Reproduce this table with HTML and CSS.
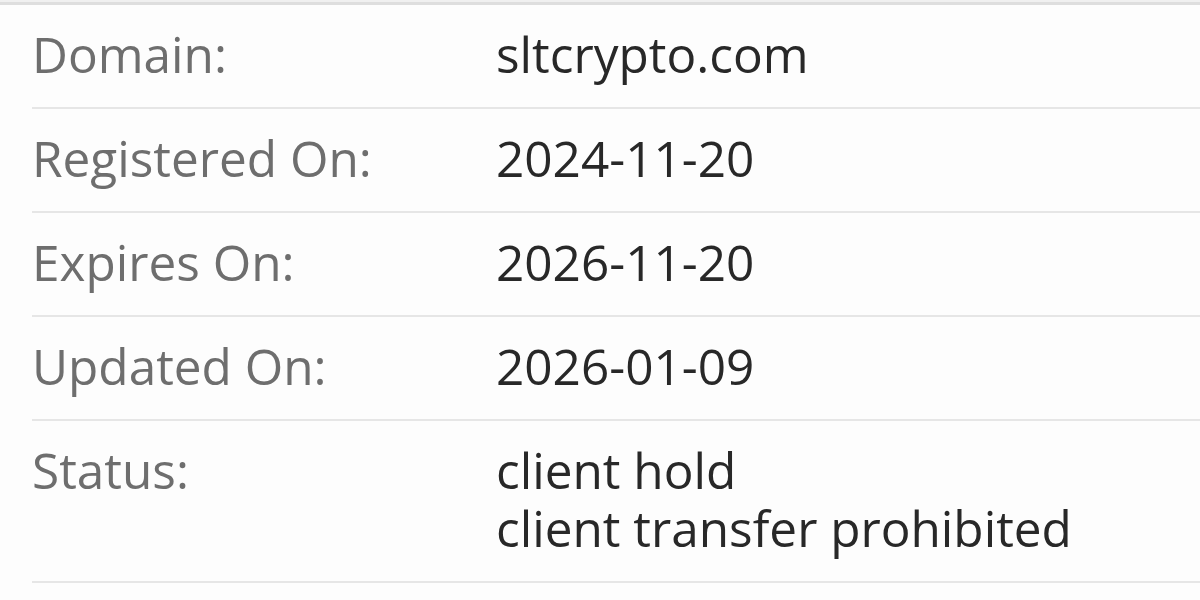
FILE: index.html
```html
<!DOCTYPE html>
<html>
<head>
<meta charset="utf-8">
<link rel="stylesheet" href="styles.css">
</head>
<body>
<div class="frame">
  <div class="whois">
    <div class="row"><div class="label">Domain:</div><div class="value"><div class="line">sltcrypto.com</div></div></div>
    <div class="row"><div class="label">Registered On:</div><div class="value"><div class="line">2024-11-20</div></div></div>
    <div class="row"><div class="label">Expires On:</div><div class="value"><div class="line">2026-11-20</div></div></div>
    <div class="row"><div class="label">Updated On:</div><div class="value"><div class="line">2026-01-09</div></div></div>
    <div class="row"><div class="label">Status:</div><div class="value"><div class="line">client hold</div><div class="line">client transfer prohibited</div></div></div>
  </div>
</div>
</body>
</html>
```
FILE: styles.css
```css
html, body {
  margin: 0;
  padding: 0;
  background: #fdfdfd;
  overflow: hidden;
}
.frame {
  border-top: 2px solid #f0f0f0;
  height: 600px;
  box-sizing: border-box;
}
.frame::before {
  content: "";
  display: block;
  height: 3px;
  background: #dedede;
}
.whois {
  margin-left: 32px;
  font-family: "Open Sans", "Noto Sans", sans-serif;
  font-size: 49.5px;
  line-height: 58px;
}
.row {
  display: flex;
  padding: 20px 0 24px;
  border-bottom: 2px solid #e6e6e6;
}
.label {
  width: 464px;
  flex: none;
  color: #6e6e6e;
}
.value {
  color: #282828;
}
.line {
  height: 58px;
  white-space: nowrap;
}
```
